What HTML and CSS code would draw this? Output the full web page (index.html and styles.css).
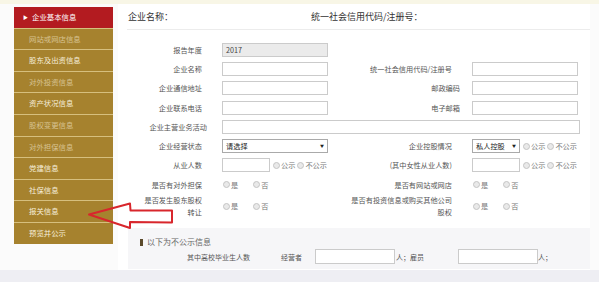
FILE: index.html
```html
<!DOCTYPE html>
<html lang="zh-CN">

<head>
    <meta charset="UTF-8">
    <meta name="viewport" content="width=device-width, initial-scale=1.0">
    <title>企业年报填报</title>
    <link rel="stylesheet" href="styles.css">
</head>

<body>
    <div class="topbar"></div>
    <div class="layout">
        <ul class="menu">
            <li class="menu-item active">企业基本信息</li>
            <li class="menu-item muted">网站或网店信息</li>
            <li class="menu-item">股东及出资信息</li>
            <li class="menu-item muted">对外投资信息</li>
            <li class="menu-item">资产状况信息</li>
            <li class="menu-item muted">股权变更信息</li>
            <li class="menu-item muted">对外担保信息</li>
            <li class="menu-item">党建信息</li>
            <li class="menu-item">社保信息</li>
            <li class="menu-item">报关信息</li>
            <li class="menu-item">预览并公示</li>
        </ul>

        <div class="main">
            <div class="head">
                <span class="head-name">企业名称：</span>
                <span class="head-code">统一社会信用代码/注册号：</span>
            </div>

            <div class="form">
                <span class="label">报告年度</span>
                <div class="input readonly">2017</div>
                <span></span>
                <span></span>

                <span class="label">企业名称</span>
                <div class="input"></div>
                <span class="label label-r">统一社会信用代码/注册号</span>
                <div class="input"></div>

                <span class="label">企业通信地址</span>
                <div class="input"></div>
                <span class="label label-s">邮政编码</span>
                <div class="input"></div>

                <span class="label">企业联系电话</span>
                <div class="input"></div>
                <span class="label label-s">电子邮箱</span>
                <div class="input"></div>

                <span class="label label-wide">企业主营业务活动</span>
                <div class="input input-wide"></div>

                <span class="label">企业经营状态</span>
                <div class="select">请选择<span class="caret">▼</span></div>
                <span class="label label-r">企业控股情况</span>
                <div class="cell">
                    <div class="select select-sm">私人控股<span class="caret">▼</span></div>
                    <span class="radio">公示</span>
                    <span class="radio">不公示</span>
                </div>

                <span class="label">从业人数</span>
                <div class="cell">
                    <div class="input input-sm"></div>
                    <span class="radio">公示</span>
                    <span class="radio">不公示</span>
                </div>
                <span class="label label-r">(其中女性从业人数)</span>
                <div class="cell">
                    <div class="input input-sm"></div>
                    <span class="radio">公示</span>
                    <span class="radio">不公示</span>
                </div>

                <span class="label">是否有对外担保</span>
                <div class="cell yesno">
                    <span class="radio">是</span>
                    <span class="radio">否</span>
                </div>
                <span class="label label-r">是否有网站或网店</span>
                <div class="cell yesno">
                    <span class="radio">是</span>
                    <span class="radio">否</span>
                </div>

                <span class="label label-2l">是否发生股东股权<br>转让</span>
                <div class="cell yesno">
                    <span class="radio">是</span>
                    <span class="radio">否</span>
                </div>
                <span class="label label-r label-2l">是否有投资信息或购买其他公司<br>股权</span>
                <div class="cell yesno">
                    <span class="radio">是</span>
                    <span class="radio">否</span>
                </div>
            </div>

            <div class="private">
                <p class="private-title">以下为不公示信息</p>
                <div class="private-row">
                    <span class="grad">其中高校毕业生人数</span>
                    <span class="owner">经营者</span>
                    <div class="input input-num"></div>
                    <span class="unit">人；雇员</span>
                    <div class="input input-num"></div>
                    <span>人；</span>
                </div>
            </div>
        </div>
    </div>

    <svg class="arrow" width="599" height="282" viewBox="0 0 599 282">
        <path d="M89 214.5 L130 203.5 L130.5 210.5 L172 210.5 L172 222.5 L130 222 L130 228 Z" />
    </svg>
</body>

</html>
```

FILE: styles.css
```css
html {
    background: #eeeef3;
}

body {
    margin: 0;
    width: 599px;
    height: 282px;
    overflow: hidden;
    position: relative;
    font-family: "Noto Sans CJK SC", "Noto Sans", sans-serif;
    color: #555;
}

.topbar {
    height: 4px;
    background: #f8f6e6;
}

.layout {
    display: flex;
    align-items: flex-start;
    height: 266px;
    padding-left: 14px;
    background: #fbfbfb;
}

/* left menu */
.menu {
    list-style: none;
    margin: 3px 0 0;
    padding: 0;
    width: 99px;
    background: #a6822e;
}

.menu-item {
    height: 20.6px;
    line-height: 20.6px;
    border-bottom: 1px solid #d6bf7e;
    padding-left: 15px;
    font-size: 7.4px;
    color: #f6eedb;
}

.menu-item:last-child {
    border-bottom: none;
}

.menu-item.muted {
    color: #d7c393;
}

.menu-item.active {
    background: #b31b20;
    color: #fff;
    padding-left: 9px;
}

.menu-item.active::before {
    content: "▶";
    font-size: 5px;
    margin-right: 4px;
    vertical-align: 1px;
}

/* main panel */
.main {
    margin-left: 5px;
    width: 472px;
    height: 266px;
    background: #fff;
    padding-left: 10px;
    box-sizing: border-box;
}

.head {
    display: flex;
    height: 25px;
    align-items: center;
    margin-left: -1px;
    padding-left: 1px;
    border-bottom: 1px solid #ececec;
    font-size: 9px;
    color: #333;
}

.head-name {
    width: 183px;
}

.form {
    display: grid;
    grid-template-columns: 94px 106px 144px 106px;
    grid-template-rows: repeat(8, 19.3px) 24px;
    align-items: center;
    margin-top: 10px;
    font-size: 7.2px;
}

.label {
    text-align: right;
    padding-right: 20px;
    white-space: nowrap;
}

.label-s {
    padding-right: 12px;
}

.label-wide {
    padding-right: 15px;
}

.label-2l {
    line-height: 12px;
}

.input {
    height: 14px;
    border: 1px solid #cbcbcb;
    background: #fff;
    box-sizing: border-box;
    line-height: 12px;
    padding-left: 3px;
    color: #444;
}

.input.readonly {
    background: #ebebeb;
}

.input-wide {
    grid-column: 2 / 5;
    margin-right: -2px;
}

.input-sm {
    width: 48px;
    flex-shrink: 0;
}

.select {
    height: 14px;
    border: 1px solid #aaa;
    box-sizing: border-box;
    display: flex;
    align-items: center;
    justify-content: space-between;
    padding: 0 3px;
    color: #222;
}

.select-sm {
    width: 48px;
    flex-shrink: 0;
}

.caret {
    font-size: 4px;
}

.cell {
    display: flex;
    align-items: center;
    white-space: nowrap;
}

.cell .radio {
    margin-left: 2px;
}

.cell .input-sm + .radio,
.cell .select-sm + .radio {
    margin-left: 3px;
}

.yesno {
    gap: 15px;
    padding-left: 1px;
}

.yesno .radio {
    margin-left: 0;
}

.radio {
    display: inline-flex;
    align-items: center;
    color: #777;
}

.radio::before {
    content: "";
    width: 5px;
    height: 5px;
    border: 1px solid #c4c4c4;
    border-radius: 50%;
    background: #e9e9e9;
    margin-right: 1px;
}

/* not public block */
.private {
    margin-top: 10px;
    height: 41px;
    background: #f6f6f8;
    padding: 8px 0 0 12px;
    box-sizing: border-box;
}

.private-title {
    margin: 0;
    height: 12px;
    line-height: 12px;
    font-size: 8px;
    color: #666;
    display: flex;
    align-items: center;
}

.private-title::before {
    content: "";
    width: 3px;
    height: 7px;
    background: #5b4a2b;
    margin-right: 4px;
}

.private-row {
    display: flex;
    align-items: center;
    height: 15px;
    margin-top: 1px;
    padding-left: 47px;
    font-size: 7px;
    color: #555;
}

.grad {
    margin-right: 31px;
}

.owner {
    margin-right: 13px;
}

.input-num {
    width: 80px;
    height: 15px;
}

.unit {
    margin: 0 34px 0 1px;
}

.arrow {
    position: absolute;
    left: 0;
    top: 0;
    pointer-events: none;
}

.arrow path {
    fill: none;
    stroke: #d8262c;
    stroke-width: 2;
    stroke-linejoin: round;
}
```
